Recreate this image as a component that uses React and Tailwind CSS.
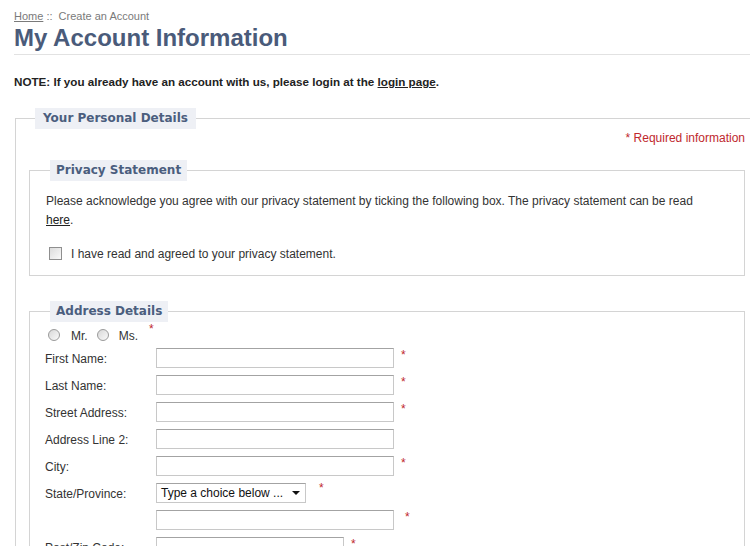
export default function App() {
  const Star = ({ cls = "" }) => (
    <span className={"text-[#c0282d] text-[12px] leading-none " + cls}>*</span>
  );
  const Input = ({ w = "w-[238px]" }) => (
    <div className={"h-[20px] border border-[#c8c8c8] border-t-[#a3a3a3] bg-white " + w}></div>
  );
  const Row = ({ label, star = true, w, children }) => (
    <div className="flex items-start h-[20px] mb-[7px]">
      <div className="w-[111px] text-[12px] text-[#333] leading-[20px] pt-[1px]">{label}</div>
      {children || <Input w={w} />}
      {star && <Star cls="ml-[7px] mt-[1px]" />}
    </div>
  );
  const legendFont = { fontFamily: '"DejaVu Sans", Verdana, sans-serif', fontSize: "12px" };
  return (
    <div
      className="w-[750px] h-[546px] overflow-hidden bg-white text-[#333]"
      style={{ fontFamily: '"Liberation Sans", Arial, sans-serif' }}
    >
      <div className="pl-[14px] pt-[9px]">
        <div className="text-[11px] leading-[14px] text-[#7a7a7a]">
          <span className="underline">Home</span>
          <span> :: &nbsp;Create an Account</span>
        </div>
        <h1 className="text-[24px] font-bold leading-[28px] text-[#4a5b7a] mt-[1px] pb-[2px] border-b border-[#e2e2e2]">
          My Account Information
        </h1>
        <p className="font-bold text-[#222] leading-[14px] mt-[20px]" style={{ fontSize: "11.65px" }}>
          NOTE: If you already have an account with us, please login at the{" "}
          <span className="underline">login page</span>.
        </p>

        <fieldset className="mt-[19px] ml-[1px] w-[780px] border border-[#d4d4d4] pl-[13px] pr-[10px] pb-[20px]">
          <legend
            className="ml-[6px] px-[8px] h-[21px] leading-[21px] bg-[#eef0f5] font-bold text-[#4b5e7e]"
            style={legendFont}
          >
            Your Personal Details
          </legend>
          <div className="w-[716px] text-right text-[12px] text-[#c0282d] leading-[16px] mt-[1px]">
            * Required information
          </div>

          <fieldset className="mt-[14px] w-[716px] border border-[#d4d4d4] pl-[16px] pr-[10px] pb-[15px]">
            <legend
              className="ml-[4px] px-[6px] h-[21px] leading-[21px] bg-[#eef0f5] font-bold text-[#4b5e7e]"
              style={legendFont}
            >
              Privacy Statement
            </legend>
            <p className="w-[666px] text-[12px] leading-[19px] text-[#333] mt-[11px]">
              Please acknowledge you agree with our privacy statement by ticking the following box. The privacy statement can be read{" "}
              <span className="underline text-[#222]">here</span>.
            </p>
            <div className="flex items-center h-[14px] mt-[16px]">
              <div className="w-[13px] h-[13px] ml-[3px] border border-[#8f8f8f] bg-gradient-to-br from-[#dcdcdc] to-[#fafafa]"></div>
              <span className="ml-[9px] text-[12px] text-[#333] mt-[2px]">I have read and agreed to your privacy statement.</span>
            </div>
          </fieldset>

          <fieldset className="mt-[25px] w-[716px] border border-[#d4d4d4] pl-[15px] pr-[10px] pb-[20px]">
            <legend
              className="ml-[5px] px-[6px] h-[21px] leading-[21px] bg-[#eef0f5] font-bold text-[#4b5e7e]"
              style={legendFont}
            >
              Address Details
            </legend>
            <div className="flex items-start h-[20px] mt-[3px] mb-[3px]">
              <div className="w-[12px] h-[12px] mt-[4px] ml-[3px] rounded-full border border-[#9a9a9a] bg-gradient-to-br from-[#d8d8d8] to-[#fafafa]"></div>
              <span className="ml-[11px] text-[12px] leading-[20px] mt-[1px]">Mr.</span>
              <div className="w-[12px] h-[12px] mt-[4px] ml-[9px] rounded-full border border-[#9a9a9a] bg-gradient-to-br from-[#d8d8d8] to-[#fafafa]"></div>
              <span className="ml-[10px] text-[12px] leading-[20px] mt-[1px]">Ms.</span>
              <Star cls="ml-[11px] mt-[-2px]" />
            </div>
            <Row label="First Name:" />
            <Row label="Last Name:" />
            <Row label="Street Address:" />
            <Row label="Address Line 2:" star={false} />
            <Row label="City:" />
            <div className="flex items-start h-[20px] mb-[7px]">
              <div className="w-[111px] text-[12px] text-[#333] leading-[20px] pt-[1px]">State/Province:</div>
              <div className="w-[150px] h-[20px] border border-[#c8c8c8] border-t-[#a3a3a3] bg-white flex items-center pl-[4px] pr-[5px]">
                <span className="text-[12px] text-[#111] flex-1">Type a choice below ...</span>
                <span className="w-0 h-0 border-l-[4px] border-r-[4px] border-t-[4px] border-l-transparent border-r-transparent border-t-[#111]"></span>
              </div>
              <Star cls="ml-[13px] mt-[-1px]" />
            </div>
            <div className="flex items-start h-[20px] mb-[7px]">
              <div className="w-[111px]"></div>
              <Input />
              <Star cls="ml-[11px] mt-[1px]" />
            </div>
            <Row label="Post/Zip Code:" w="w-[188px]" />
          </fieldset>
        </fieldset>
      </div>
    </div>
  );
}
